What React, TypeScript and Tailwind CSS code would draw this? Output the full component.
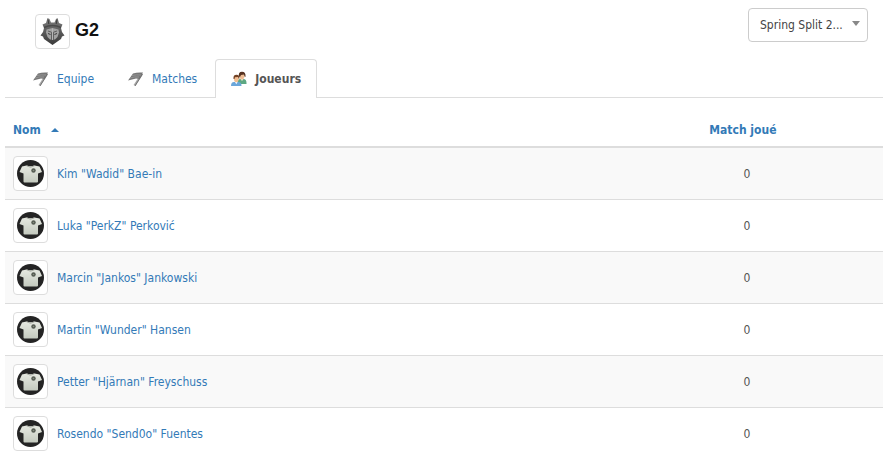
import { useState, type ReactNode } from "react";

const players = [
  'Kim "Wadid" Bae-in',
  'Luka "PerkZ" Perković',
  'Marcin "Jankos" Jankowski',
  'Martin "Wunder" Hansen',
  'Petter "Hjärnan" Freyschuss',
  'Rosendo "Send0o" Fuentes',
];

function Thumbnail({ children }: { children: ReactNode }) {
  return (
    <span className="flex size-[35px] shrink-0 items-center justify-center rounded border border-[#ddd] bg-white">
      {children}
    </span>
  );
}

function TeamCrest() {
  return (
    <svg viewBox="0 0 27 27" className="size-[27px]" aria-hidden="true">
      <defs>
        <linearGradient id="crest" x1="0" y1="0" x2="0" y2="1">
          <stop offset="0" stopColor="#7c7c7c" />
          <stop offset="1" stopColor="#3a3a3a" />
        </linearGradient>
      </defs>
      <path d="M8.500 0 10.500 1 12 4.500h3.500L17 1 18.500 0 20 5l3.500 1.500L22 10l1 4 2.500 3.500-2.500 1-1 2.500-8.500 6L5 21l-1-2.500-2.500-1L4 14l1-4-1.500-3.500L7 5z" fill="url(#crest)" />
      <path d="m9 1.500.8 4.500M18 1.500 17.200 6" stroke="#3c3c3c" strokeWidth="1" />
      <path d="M5 9.500q8.500-4 17 0" stroke="#4a4a4a" strokeWidth="1.400" fill="none" />
      <path d="m7.500 11.500 6-1.500 6 1.500.5 3-1.500 4.500-2.500 2.500h-5L8.500 19 7 14.500z" fill="#a2a2a2" />
      <path d="M9 13 12.500 14.200V22M18 13l-3.500 1.200V22" stroke="#606060" strokeWidth="1" fill="none" />
      <path d="M9 15.500 11.500 16.500M18 15.500 15.500 16.500" stroke="#383838" strokeWidth="1" />
      <path d="M13.500 10.500V22" stroke="#bdbdbd" strokeWidth=".8" />
    </svg>
  );
}

function Jersey() {
  return (
    <svg viewBox="0 0 27 27" className="size-[27px]" aria-hidden="true">
      <defs>
        <linearGradient id="shirt" x1="0" y1="0" x2="0" y2="1">
          <stop offset="0" stopColor="#e6e9e1" />
          <stop offset="1" stopColor="#c4cabf" />
        </linearGradient>
      </defs>
      <circle cx="13.500" cy="13.500" r="13.500" fill="#242424" />
      <path d="M9.500 5.500q4 1.500 8 0L22.500 6.500 25 12l-4 1.500v8q0 1-1 1H7.500q-1 0-1-1v-8L2.500 12 5 6.500z" fill="url(#shirt)" />
      <path d="M9.500 5.800q4 2.800 8 0" fill="none" stroke="#9ba095" strokeWidth=".8" />
      <circle cx="16.500" cy="10.500" r="2.200" fill="#555b52" />
      <circle cx="16.500" cy="10.500" r=".8" fill="#858d7e" />
    </svg>
  );
}

function FlagIcon() {
  return (
    <svg viewBox="0 0 16 16" className="size-4" aria-hidden="true">
      <path d="m14 3-7.500 11.500" stroke="#a6a6a6" strokeWidth="2.200" />
      <path d="M5 2.500q4-1.500 10-1L11.500 8 8 7.500 0 9.500 5 2.500z" fill="#777" />
      <path d="M4 4.500q4-1 9-.5M2 7q4-1.500 9-1" stroke="#9c9c9c" strokeWidth=".8" fill="none" />
      <path d="m14.500 3-7.500 12" stroke="#666" strokeWidth=".8" />
    </svg>
  );
}

function PlayersIcon() {
  return (
    <svg viewBox="0 0 16 16" className="size-4" aria-hidden="true">
      <path d="M6.500 13V10Q7 8 9 8h4q2.500.5 2.500 4v1z" fill="#5da883" />
      <path d="m9.500 8 1.500 2 1.500-2z" fill="#f8e5d2" />
      <ellipse cx="11" cy="5" rx="2.400" ry="3.400" fill="#eebd94" />
      <path d="M8 5.500Q7 .8 11 .8t3.500 5.200l-1-.5-.5-2-3 .5-1 2z" fill="#573220" />
      <path d="M0 15q0-4 3-4h4.500q3 0 3 4z" fill="#6ba6da" />
      <path d="m4 11 1.300 2.200L6.600 11z" fill="#f7faff" />
      <ellipse cx="5.300" cy="8" rx="2.300" ry="3.200" fill="#f2bd91" />
      <path d="M2.500 8Q2 3.800 5.500 3.800T8.300 8l-.8-.5L7 6l-3 .2L3.500 8z" fill="#744326" />
    </svg>
  );
}

const tabs = [
  { label: "Equipe", icon: <FlagIcon /> },
  { label: "Matches", icon: <FlagIcon /> },
  { label: "Joueurs", icon: <PlayersIcon /> },
];

export default function App() {
  const [active, setActive] = useState("Joueurs");
  const [ascending, setAscending] = useState(true);
  const rows = ascending ? players : [...players].reverse();

  return (
    <main className="bg-white px-[5px] font-['DejaVu_Sans_Condensed',Tahoma,sans-serif] text-xs text-[#555]">
      <header className="flex h-[59px] items-start justify-between pt-2 pr-[15px] pl-[30px]">
        <div className="flex gap-[5px] pt-1.5">
          <Thumbnail>
            <TeamCrest />
          </Thumbnail>
          <h1 className="font-['Liberation_Sans',Arial,sans-serif] text-lg leading-8 font-bold text-[#111]">G2</h1>
        </div>
        <div className="relative">
          <select
            aria-label="Saison"
            className="h-[34px] w-[120px] appearance-none rounded border border-[#ccc] bg-white pr-6 pl-[11px] text-xs text-[#444]"
          >
            <option>Spring Split 2...</option>
          </select>
          <span className="pointer-events-none absolute top-[13px] right-2 border-x-4 border-t-5 border-x-transparent border-t-[#888]" />
        </div>
      </header>

      <nav className="flex h-[39px] gap-0.5 border-b border-[#ddd] pl-3">
        {tabs.map((tab) => (
          <button
            key={tab.label}
            type="button"
            onClick={() => setActive(tab.label)}
            className={
              tab.label === active
                ? "flex h-[39px] items-center gap-2 rounded-t border border-b-0 border-[#ddd] bg-white px-[15px] font-bold text-[#555]"
                : "flex h-[38px] items-center gap-2 border border-b-0 border-transparent px-[15px] text-[#337ab7]"
            }
          >
            {tab.icon}
            {tab.label}
          </button>
        ))}
      </nav>

      <table className="mt-3 w-full table-fixed border-separate border-spacing-0">
        <thead>
          <tr className="text-[#337ab7]">
            <th className="h-[38px] w-[69%] border-b-2 border-[#ddd] px-2 pt-1 text-left">
              <button
                type="button"
                onClick={() => setAscending(!ascending)}
                className="flex items-center gap-2.5 font-bold"
              >
                Nom
                <span
                  className={
                    ascending
                      ? "border-x-4 border-b-4 border-x-transparent border-b-[#337ab7]"
                      : "border-x-4 border-t-4 border-x-transparent border-t-[#337ab7]"
                  }
                />
              </button>
            </th>
            <th className="border-b-2 border-[#ddd] pt-1 pr-4 pl-2 text-center font-bold">Match joué</th>
          </tr>
        </thead>
        <tbody>
          {rows.map((name) => (
            <tr key={name} className="group odd:bg-[#f9f9f9]">
              <td className="border-b border-[#ddd] p-2 group-last:border-transparent">
                <a href="#joueur" className="flex items-center gap-[9px] text-[#337ab7]">
                  <Thumbnail>
                    <Jersey />
                  </Thumbnail>
                  {name}
                </a>
              </td>
              <td className="border-b border-[#ddd] p-2 text-center group-last:border-transparent">0</td>
            </tr>
          ))}
        </tbody>
      </table>
    </main>
  );
}
